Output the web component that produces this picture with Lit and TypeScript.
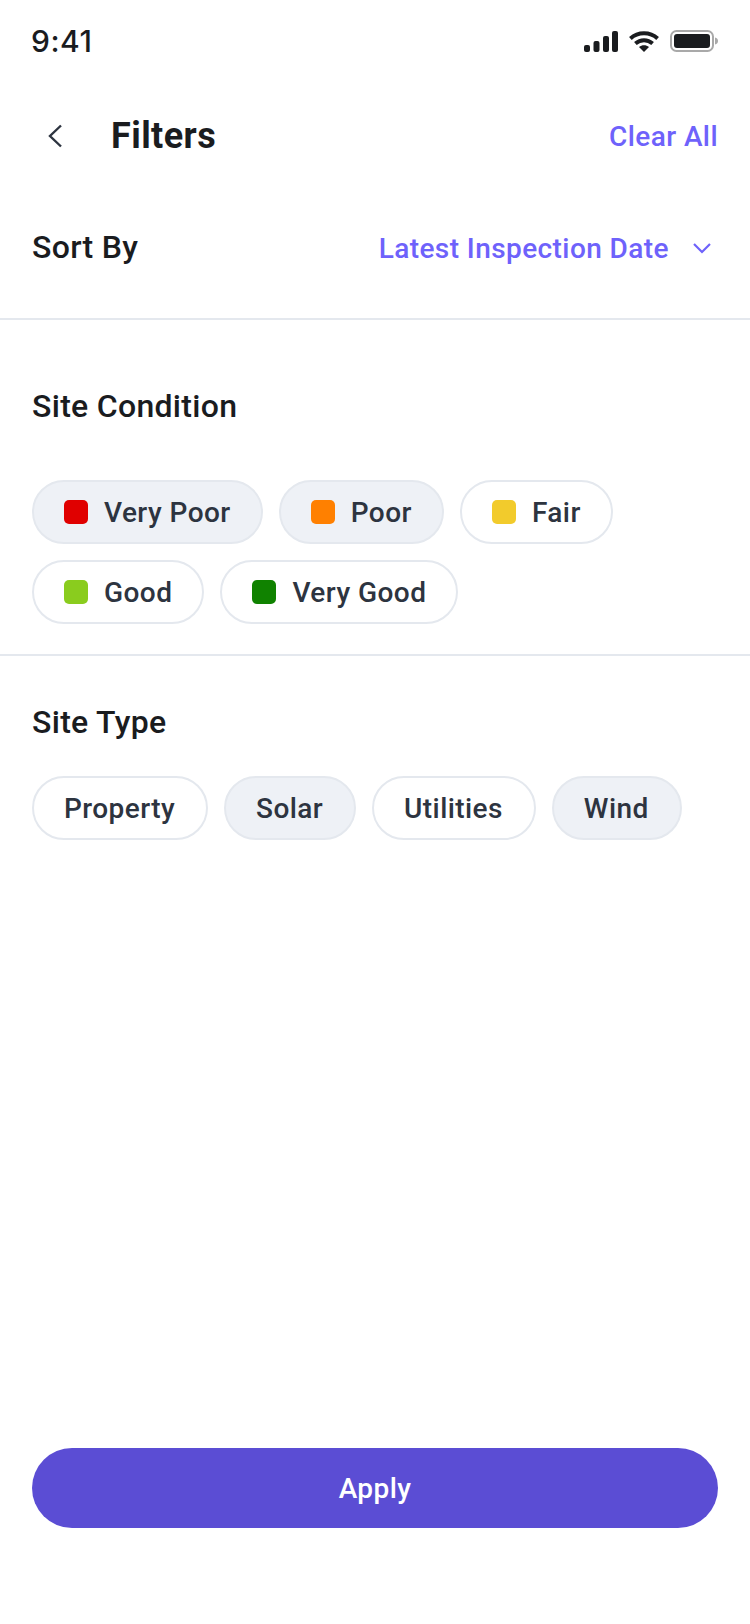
import { LitElement, html, css, nothing } from 'lit';
import { customElement } from 'lit/decorators.js';

const conditions = [
  { label: 'Very Poor', color: '#e00000', on: true },
  { label: 'Poor', color: '#ff8000', on: true },
  { label: 'Fair', color: '#f2cb2c', on: false },
  { label: 'Good', color: '#8acc1e', on: false },
  { label: 'Very Good', color: '#108200', on: false },
];

const types = [
  { label: 'Property', on: false },
  { label: 'Solar', on: true },
  { label: 'Utilities', on: false },
  { label: 'Wind', on: true },
];

@customElement('app-root')
export class AppRoot extends LitElement {
  static styles = css`
    :host {
      display: block;
      width: 750px;
      background: #fff;
      font-family: Roboto, sans-serif;
      color: #1a1c1f;
      letter-spacing: 0.42px;
    }

    .page {
      display: flex;
      flex-direction: column;
      min-height: 1624px;
      box-sizing: border-box;
    }

    .status {
      display: flex;
      align-items: center;
      justify-content: space-between;
      height: 78px;
      padding: 2px 32px 0 31px;
    }

    .time {
      font-family: Inter, sans-serif;
      font-size: 30px;
      font-weight: 500;
      letter-spacing: 0.5px;
    }

    .status-icons {
      display: flex;
      align-items: center;
      gap: 11px;
    }

    .status-icons svg {
      display: block;
    }

    .nav {
      display: flex;
      align-items: center;
      height: 108px;
      padding: 2px 32px 0 47px;
    }

    .nav svg {
      display: block;
    }

    .title {
      margin-left: 48px;
      font-size: 36px;
      font-weight: 700;
      flex: 1;
    }

    .clear {
      font-size: 28px;
      font-weight: 500;
      color: #6e62fb;
    }

    .sort {
      display: flex;
      align-items: center;
      justify-content: space-between;
      height: 116px;
      padding: 0 32px 12px;
      border-bottom: 2px solid #e4e8ee;
    }

    .heading {
      padding-bottom: 2px;
      font-size: 32px;
      font-weight: 500;
      line-height: 40px;
      letter-spacing: 0.3px;
    }

    .sort-value {
      display: flex;
      align-items: center;
      gap: 24px;
      padding-right: 7px;
      font-size: 28px;
      font-weight: 500;
      color: #6e62fb;
    }

    .condition {
      padding: 66px 32px 30px;
      border-bottom: 2px solid #e4e8ee;
    }

    .type {
      padding: 46px 32px 0;
    }

    .chips {
      display: flex;
      flex-wrap: wrap;
      gap: 16px;
    }

    .condition .chips {
      margin-top: 52px;
      letter-spacing: 0.45px;
    }

    .type .chips {
      margin-top: 32px;
    }

    .chip {
      display: flex;
      align-items: center;
      gap: 16px;
      height: 64px;
      box-sizing: border-box;
      padding: 0 30px;
      border: 2px solid #e4e8ee;
      border-radius: 32px;
      background: #fff;
      font-size: 28px;
      font-weight: 500;
      color: #2d3440;
    }

    .type .chip {
      padding-right: 31px;
    }

    .chip.on {
      background: #eef1f6;
    }

    .dot {
      width: 24px;
      height: 24px;
      border-radius: 5px;
    }

    .footer {
      margin-top: auto;
      padding: 0 32px 96px;
    }

    .apply {
      display: flex;
      align-items: center;
      justify-content: center;
      height: 80px;
      border-radius: 40px;
      background: #5b4dd4;
      color: #fff;
      font-size: 28px;
      font-weight: 500;
    }
  `;

  private chip(label: string, on: boolean, color?: string) {
    return html`
      <div class="chip ${on ? 'on' : ''}">
        ${color ? html`<span class="dot" style="background:${color}"></span>` : nothing}
        ${label}
      </div>
    `;
  }

  render() {
    return html`
      <div class="page">
        <div class="status">
          <span class="time">9:41</span>
          <div class="status-icons">
            <svg width="34" height="21" viewBox="0 0 34 21" fill="#1a1c1f">
              <rect x="0" y="14" width="6" height="7" rx="2" />
              <rect x="9.5" y="10" width="6" height="11" rx="2" />
              <rect x="19" y="5" width="6" height="16" rx="2" />
              <rect x="28" y="0" width="6" height="21" rx="2" />
            </svg>
            <svg width="30" height="21" viewBox="0 0 30 21" fill="none" stroke="#1a1c1f" stroke-width="4">
              <path d="M1.4 7.4C9 0.6 21 0.6 28.6 7.4" />
              <path d="M6.4 12.6C11.4 8.2 18.6 8.2 23.6 12.6" />
              <path d="M10 16L15 21L20 16C17 13.6 13 13.6 10 16Z" fill="#1a1c1f" stroke="none" />
            </svg>
            <svg width="48" height="22" viewBox="0 0 48 22">
              <rect x="1" y="1" width="42" height="20" rx="5.5" fill="none" stroke="#a9a9a9" stroke-width="2" />
              <rect x="4" y="4" width="36" height="14" rx="3" fill="#1a1c1f" />
              <path d="M45 7.5C47 8 48 9.4 48 11C48 12.6 47 14 45 14.5Z" fill="#a9a9a9" />
            </svg>
          </div>
        </div>

        <div class="nav">
          <svg width="16" height="24" viewBox="0 0 16 24" fill="none" stroke="#2d3440" stroke-width="2.4">
            <path d="M14 1.5L3 12L14 22.5" />
          </svg>
          <span class="title">Filters</span>
          <span class="clear">Clear All</span>
        </div>

        <div class="sort">
          <span class="heading">Sort By</span>
          <span class="sort-value">
            Latest Inspection Date
            <svg width="18" height="11" viewBox="0 0 18 11" fill="none" stroke="#6e62fb" stroke-width="2.2">
              <path d="M1 1L9 9L17 1" />
            </svg>
          </span>
        </div>

        <div class="condition">
          <div class="heading">Site Condition</div>
          <div class="chips">
            ${conditions.map((c) => this.chip(c.label, c.on, c.color))}
          </div>
        </div>

        <div class="type">
          <div class="heading">Site Type</div>
          <div class="chips">
            ${types.map((t) => this.chip(t.label, t.on))}
          </div>
        </div>

        <div class="footer">
          <div class="apply">Apply</div>
        </div>
      </div>
    `;
  }
}
